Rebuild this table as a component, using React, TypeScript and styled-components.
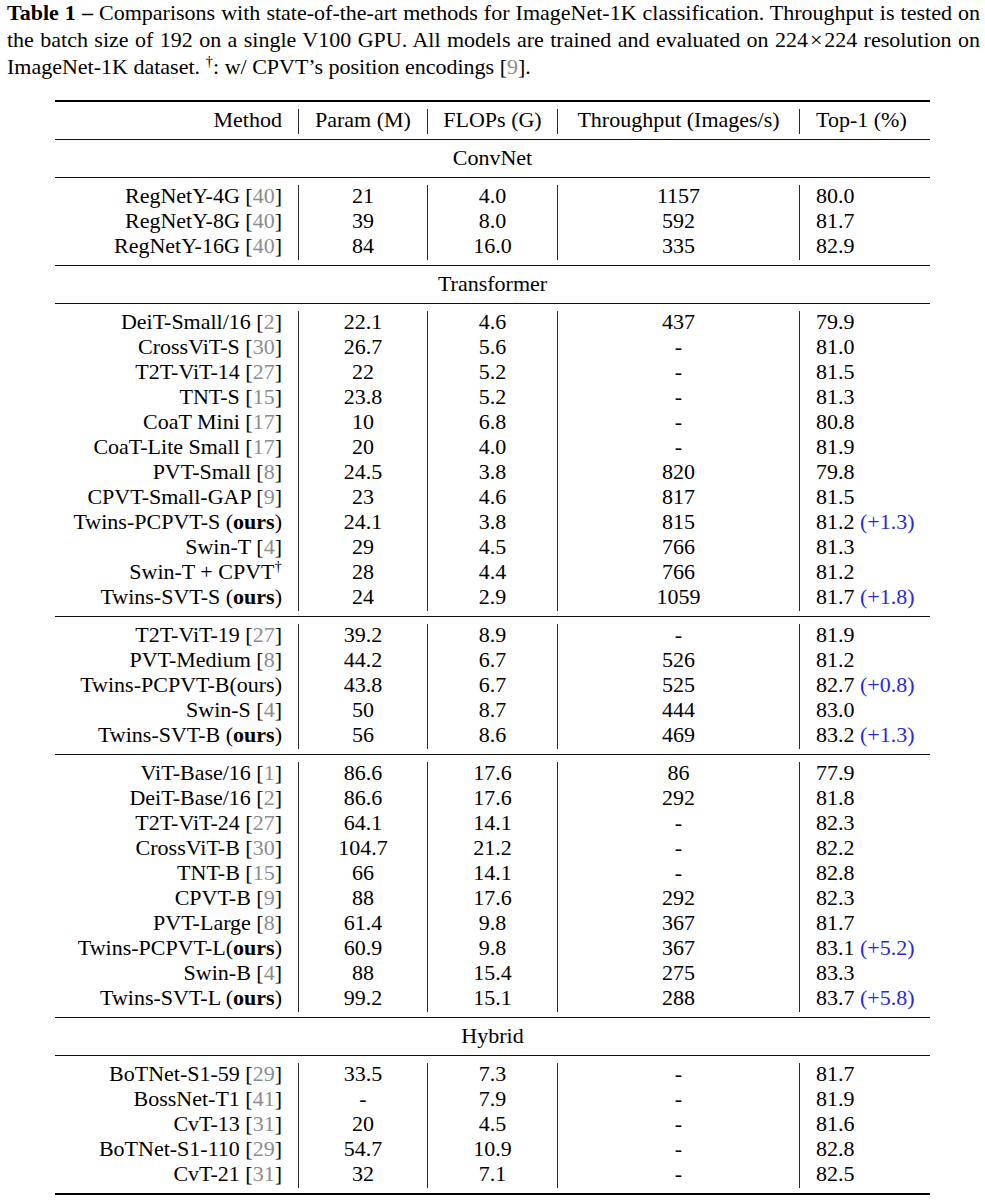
import React from "react";
import styled, { createGlobalStyle } from "styled-components";

const GlobalStyle = createGlobalStyle`
  html, body {
    margin: 0;
    padding: 0;
    background: #ffffff;
    color: #000000;
    font-family: "Liberation Serif", "Times New Roman", serif;
  }
`;

const Page = styled.div`
  padding: 0 5px 0 7px;
  width: 973px;
`;

const Caption = styled.div`
  font-size: 22px;
  line-height: 27px;
  width: 973px;
`;

const CaptionLine = styled.div<{ $last?: boolean }>`
  white-space: nowrap;
  height: 27px;
  line-height: 25px;
  text-align: ${(p) => (p.$last ? "left" : "justify")};
  text-align-last: ${(p) => (p.$last ? "left" : "justify")};
`;

const Bold = styled.b`
  font-weight: 700;
`;

const Sup = styled.sup`
  font-size: 0.68em;
  line-height: 0;
  vertical-align: 0.55em;
`;

const Cite = styled.span`
  color: #8c8c8c;
`;

const Gain = styled.span`
  color: #2a2ad6;
`;

const Table = styled.div`
  margin: 19px 0 0 48px;
  width: 875px;
  font-size: 22px;
`;

const Rule = styled.div<{ $thick?: boolean }>`
  height: ${(p) => (p.$thick ? 2 : 1)}px;
  background: ${(p) => (p.$thick ? "#000" : "#111")};
`;

const Group = styled.div`
  padding: 7px 0 5px;
`;

const Row = styled.div`
  display: grid;
  grid-template-columns: 243px 129px 130px 242px 131px;
  height: 25px;
  line-height: 21px;
`;

const Cell = styled.div<{ $align: "left" | "center" | "right" }>`
  white-space: nowrap;
  text-align: ${(p) => p.$align};
  padding: ${(p) =>
    p.$align === "right" ? "0 16px 0 0" : p.$align === "left" ? "0 0 0 16px" : "0"};
  border-left: ${(p) => (p.$align === "right" ? "none" : "1px solid #2a2a2a")};
`;

const GroupLabel = styled.div`
  height: 25px;
  line-height: 21px;
  text-align: center;
`;

type Entry = {
  name: React.ReactNode;
  param: string;
  flops: string;
  tp: string;
  top1: string;
  gain?: string;
};

const c = (name: string, ref: string) => (
  <>
    {name} [<Cite>{ref}</Cite>]
  </>
);

const ours = (name: string, space = true) => (
  <>
    {name}
    {space ? " " : ""}(<Bold>ours</Bold>)
  </>
);

const convnet: Entry[] = [
  { name: c("RegNetY-4G", "40"), param: "21", flops: "4.0", tp: "1157", top1: "80.0" },
  { name: c("RegNetY-8G", "40"), param: "39", flops: "8.0", tp: "592", top1: "81.7" },
  { name: c("RegNetY-16G", "40"), param: "84", flops: "16.0", tp: "335", top1: "82.9" },
];

const trans1: Entry[] = [
  { name: c("DeiT-Small/16", "2"), param: "22.1", flops: "4.6", tp: "437", top1: "79.9" },
  { name: c("CrossViT-S", "30"), param: "26.7", flops: "5.6", tp: "-", top1: "81.0" },
  { name: c("T2T-ViT-14", "27"), param: "22", flops: "5.2", tp: "-", top1: "81.5" },
  { name: c("TNT-S", "15"), param: "23.8", flops: "5.2", tp: "-", top1: "81.3" },
  { name: c("CoaT Mini", "17"), param: "10", flops: "6.8", tp: "-", top1: "80.8" },
  { name: c("CoaT-Lite Small", "17"), param: "20", flops: "4.0", tp: "-", top1: "81.9" },
  { name: c("PVT-Small", "8"), param: "24.5", flops: "3.8", tp: "820", top1: "79.8" },
  { name: c("CPVT-Small-GAP", "9"), param: "23", flops: "4.6", tp: "817", top1: "81.5" },
  { name: ours("Twins-PCPVT-S"), param: "24.1", flops: "3.8", tp: "815", top1: "81.2", gain: "(+1.3)" },
  { name: c("Swin-T", "4"), param: "29", flops: "4.5", tp: "766", top1: "81.3" },
  {
    name: (
      <>
        Swin-T + CPVT<Sup>†</Sup>
      </>
    ),
    param: "28",
    flops: "4.4",
    tp: "766",
    top1: "81.2",
  },
  { name: ours("Twins-SVT-S"), param: "24", flops: "2.9", tp: "1059", top1: "81.7", gain: "(+1.8)" },
];

const trans2: Entry[] = [
  { name: c("T2T-ViT-19", "27"), param: "39.2", flops: "8.9", tp: "-", top1: "81.9" },
  { name: c("PVT-Medium", "8"), param: "44.2", flops: "6.7", tp: "526", top1: "81.2" },
  { name: "Twins-PCPVT-B(ours)", param: "43.8", flops: "6.7", tp: "525", top1: "82.7", gain: "(+0.8)" },
  { name: c("Swin-S", "4"), param: "50", flops: "8.7", tp: "444", top1: "83.0" },
  { name: ours("Twins-SVT-B"), param: "56", flops: "8.6", tp: "469", top1: "83.2", gain: "(+1.3)" },
];

const trans3: Entry[] = [
  { name: c("ViT-Base/16", "1"), param: "86.6", flops: "17.6", tp: "86", top1: "77.9" },
  { name: c("DeiT-Base/16", "2"), param: "86.6", flops: "17.6", tp: "292", top1: "81.8" },
  { name: c("T2T-ViT-24", "27"), param: "64.1", flops: "14.1", tp: "-", top1: "82.3" },
  { name: c("CrossViT-B", "30"), param: "104.7", flops: "21.2", tp: "-", top1: "82.2" },
  { name: c("TNT-B", "15"), param: "66", flops: "14.1", tp: "-", top1: "82.8" },
  { name: c("CPVT-B", "9"), param: "88", flops: "17.6", tp: "292", top1: "82.3" },
  { name: c("PVT-Large", "8"), param: "61.4", flops: "9.8", tp: "367", top1: "81.7" },
  { name: ours("Twins-PCPVT-L", false), param: "60.9", flops: "9.8", tp: "367", top1: "83.1", gain: "(+5.2)" },
  { name: c("Swin-B", "4"), param: "88", flops: "15.4", tp: "275", top1: "83.3" },
  { name: ours("Twins-SVT-L"), param: "99.2", flops: "15.1", tp: "288", top1: "83.7", gain: "(+5.8)" },
];

const hybrid: Entry[] = [
  { name: c("BoTNet-S1-59", "29"), param: "33.5", flops: "7.3", tp: "-", top1: "81.7" },
  { name: c("BossNet-T1", "41"), param: "-", flops: "7.9", tp: "-", top1: "81.9" },
  { name: c("CvT-13", "31"), param: "20", flops: "4.5", tp: "-", top1: "81.6" },
  { name: c("BoTNet-S1-110", "29"), param: "54.7", flops: "10.9", tp: "-", top1: "82.8" },
  { name: c("CvT-21", "31"), param: "32", flops: "7.1", tp: "-", top1: "82.5" },
];

const DataRow: React.FC<{ e: Entry }> = ({ e }) => (
  <Row>
    <Cell $align="right">{e.name}</Cell>
    <Cell $align="center">{e.param}</Cell>
    <Cell $align="center">{e.flops}</Cell>
    <Cell $align="center">{e.tp}</Cell>
    <Cell $align="left">
      {e.top1}
      {e.gain ? (
        <>
          {" "}
          <Gain>{e.gain}</Gain>
        </>
      ) : null}
    </Cell>
  </Row>
);

const Body: React.FC<{ rows: Entry[] }> = ({ rows }) => (
  <Group>
    {rows.map((e, i) => (
      <DataRow key={i} e={e} />
    ))}
  </Group>
);

const Label: React.FC<{ text: string }> = ({ text }) => (
  <Group>
    <GroupLabel>{text}</GroupLabel>
  </Group>
);

export default function App() {
  return (
    <Page>
      <GlobalStyle />
      <Caption>
        <CaptionLine>
          <Bold>Table 1 –</Bold> Comparisons with state-of-the-art methods for ImageNet-1K classification. Throughput is tested on
        </CaptionLine>
        <CaptionLine>
          the batch size of 192 on a single V100 GPU. All models are trained and evaluated on 224{"\u200A"}×{"\u200A"}224 resolution on
        </CaptionLine>
        <CaptionLine $last>
          ImageNet-1K dataset. <Sup>†</Sup>: w/ CPVT’s position encodings [<Cite>9</Cite>].
        </CaptionLine>
      </Caption>
      <Table>
        <Rule $thick />
        <Group>
          <Row>
            <Cell $align="right">Method</Cell>
            <Cell $align="center">Param (M)</Cell>
            <Cell $align="center">FLOPs (G)</Cell>
            <Cell $align="center">Throughput (Images/s)</Cell>
            <Cell $align="left">Top-1 (%)</Cell>
          </Row>
        </Group>
        <Rule />
        <Label text="ConvNet" />
        <Rule />
        <Body rows={convnet} />
        <Rule />
        <Label text="Transformer" />
        <Rule />
        <Body rows={trans1} />
        <Rule />
        <Body rows={trans2} />
        <Rule />
        <Body rows={trans3} />
        <Rule />
        <Label text="Hybrid" />
        <Rule />
        <Body rows={hybrid} />
        <Rule $thick />
      </Table>
    </Page>
  );
}
